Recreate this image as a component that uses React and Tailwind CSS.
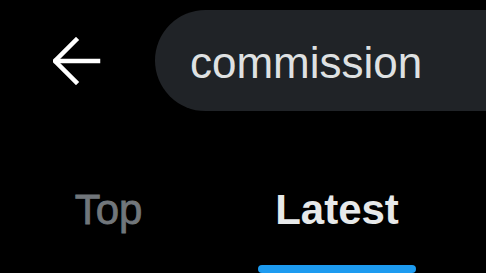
import React from 'react';

const BackArrow = () => (
  <svg width="48" height="48" viewBox="0 0 48 48" fill="none" stroke="#ffffff" strokeWidth="4.5" strokeLinecap="square">
    <path d="M3 24 H45" />
    <path d="M23 3 L2 24 L23 45" />
  </svg>
);

const App = () => {
  return (
    <div
      className="w-[486px] h-[273px] bg-black overflow-hidden flex flex-col"
      style={{ fontFamily: '"Liberation Sans", Arial, sans-serif' }}
    >
      {/* Header */}
      <div className="h-[121px] flex items-center shrink-0">
        <div className="pl-[53px] pr-[54px] flex items-center">
          <BackArrow />
        </div>
        <div className="w-[380px] shrink-0 h-[101px] rounded-full bg-[#202327] flex items-center pl-[35px] pt-[5px]">
          <span className="text-[44px] text-[#dfe1e2] leading-none">commission</span>
        </div>
      </div>

      {/* Tabs */}
      <div className="flex flex-1">
        <div className="w-[217px] flex flex-col items-center">
          <div className="pt-[65px] text-[42px] leading-[48px] text-[#71767b] [-webkit-text-stroke:0.8px_#71767b]">Top</div>
        </div>
        <div className="w-[240px] flex flex-col items-center">
          <div className="pt-[65px] text-[42px] leading-[48px] font-bold text-[#e7e9ea]">Latest</div>
          <div className="mt-auto w-[158px] h-[8px] rounded-full bg-[#1d9bf0]" />
        </div>
      </div>
    </div>
  );
};

export default App;
